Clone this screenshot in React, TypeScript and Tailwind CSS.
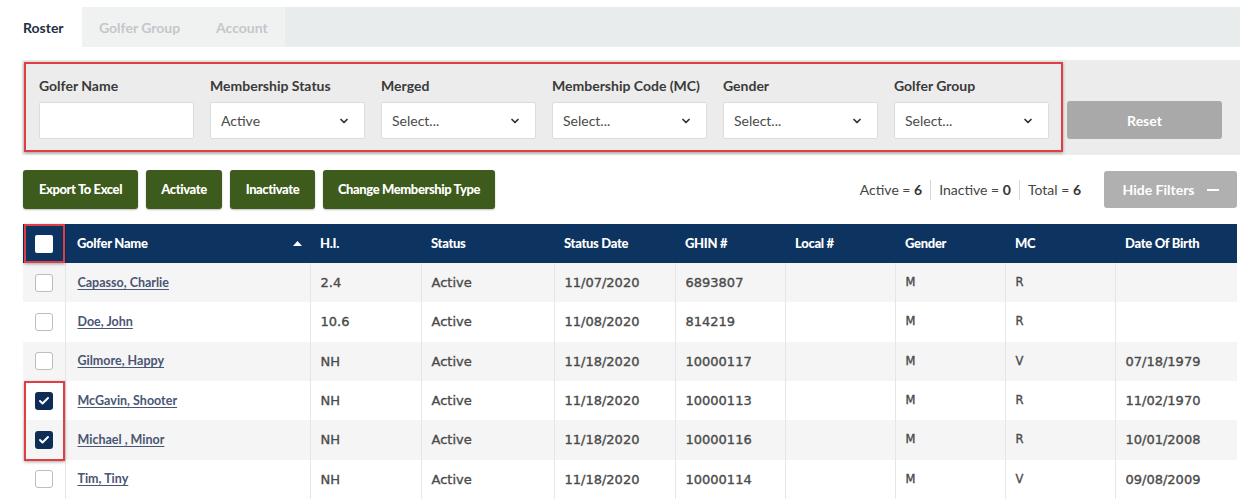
import React from "react";
import { ChevronDown, Check } from "lucide-react";

const LATO = "font-['Lato','Noto_Sans',sans-serif]";
const DEJA = "font-['DejaVu_Sans','Liberation_Sans',sans-serif]";

type Golfer = {
  name: string;
  hi: string;
  status: string;
  date: string;
  ghin: string;
  local: string;
  gender: string;
  mc: string;
  dob: string;
  checked: boolean;
};

const golfers: Golfer[] = [
  { name: "Capasso, Charlie", hi: "2.4", status: "Active", date: "11/07/2020", ghin: "6893807", local: "", gender: "M", mc: "R", dob: "", checked: false },
  { name: "Doe, John", hi: "10.6", status: "Active", date: "11/08/2020", ghin: "814219", local: "", gender: "M", mc: "R", dob: "", checked: false },
  { name: "Gilmore, Happy", hi: "NH", status: "Active", date: "11/18/2020", ghin: "10000117", local: "", gender: "M", mc: "V", dob: "07/18/1979", checked: false },
  { name: "McGavin, Shooter", hi: "NH", status: "Active", date: "11/18/2020", ghin: "10000113", local: "", gender: "M", mc: "R", dob: "11/02/1970", checked: true },
  { name: "Michael , Minor", hi: "NH", status: "Active", date: "11/18/2020", ghin: "10000116", local: "", gender: "M", mc: "R", dob: "10/01/2008", checked: true },
  { name: "Tim, Tiny", hi: "NH", status: "Active", date: "11/18/2020", ghin: "10000114", local: "", gender: "M", mc: "V", dob: "09/08/2009", checked: false },
];

function SelectBox({ value }: { value: string }) {
  return (
    <div className="flex h-[37px] w-[155px] items-center justify-between rounded-[2px] border border-[#dcdcdc] bg-white pl-[10px] pr-[14px]">
      <span className={`${LATO} text-[14px] text-[#4a4a4a]`}>{value}</span>
      <ChevronDown size={12} strokeWidth={3.5} className="text-[#333]" />
    </div>
  );
}

function FilterField({ label, children }: { label: string; children: React.ReactNode }) {
  return (
    <div className="flex w-[155px] flex-col">
      <div className={`${LATO} mb-[8px] h-[16px] text-[14px] font-bold leading-[16px] text-[#3a3a3a]`}>{label}</div>
      {children}
    </div>
  );
}

function CheckBox({ checked, header }: { checked?: boolean; header?: boolean }) {
  if (header) {
    return <div className="mx-auto h-[18px] w-[18px] rounded-[2px] bg-white" />;
  }
  if (checked) {
    return (
      <div className="mx-auto flex h-[18px] w-[18px] items-center justify-center rounded-[3px] bg-[#0d2d56]">
        <Check size={12} strokeWidth={4} className="text-white" />
      </div>
    );
  }
  return <div className="mx-auto h-[18px] w-[18px] rounded-[3px] border border-[#bdbdbd] bg-white" />;
}

function GreenButton({ label, w }: { label: string; w: string }) {
  return (
    <button
      className={`${LATO} ${w} h-[39px] rounded-[3px] bg-[#3d5b1c] text-[13px] font-black tracking-[-0.4px] text-white shadow-[0_1px_2px_rgba(0,0,0,0.25)]`}
    >
      {label}
    </button>
  );
}

const headers = ["Golfer Name", "H.I.", "Status", "Status Date", "GHIN #", "Local #", "Gender", "MC", "Date Of Birth"];
const widths = ["w-[42px]", "w-[245px]", "w-[111px]", "w-[133px]", "w-[121px]", "w-[110px]", "w-[110px]", "w-[110px]", "w-[110px]", "w-[122px]"];

export default function App() {
  return (
    <div className="h-[504px] w-[1248px] overflow-hidden bg-white pt-[7px]">
      {/* tab strip */}
      <div className="ml-[7px] mr-[8px] flex h-[40px] bg-[#e9ecec]">
        <div className={`${LATO} flex w-[75px] items-center bg-white pl-[16px] text-[14px] font-bold text-[#22303f]`}>Roster</div>
        <div className={`${LATO} flex w-[118px] items-center bg-[#f0f2f2] pl-[17px] text-[14px] font-bold text-[#c3c7ca]`}>Golfer Group</div>
        <div className={`${LATO} flex w-[85px] items-center bg-[#f0f2f2] pl-[16px] text-[14px] font-bold text-[#c3c7ca]`}>Account</div>
      </div>

      <div className="ml-[22px] mr-[8px]">
        {/* filter panel */}
        <div className="mt-[13px] flex h-[95px] items-start bg-[#ececec] pl-[2px] pt-[2px]">
          <div className="flex h-[90px] w-[1039px] gap-[16px] border-2 border-[#de3f47] pl-[13px] pt-[14px] shadow-[0_1px_3px_rgba(0,0,0,0.35)]">
            <FilterField label="Golfer Name">
              <div className="h-[37px] w-[155px] rounded-[2px] border border-[#dcdcdc] bg-white" />
            </FilterField>
            <FilterField label="Membership Status">
              <SelectBox value="Active" />
            </FilterField>
            <FilterField label="Merged">
              <SelectBox value="Select..." />
            </FilterField>
            <FilterField label="Membership Code (MC)">
              <SelectBox value="Select..." />
            </FilterField>
            <FilterField label="Gender">
              <SelectBox value="Select..." />
            </FilterField>
            <FilterField label="Golfer Group">
              <SelectBox value="Select..." />
            </FilterField>
          </div>
          <button className={`${LATO} ml-[4px] mt-[39px] h-[38px] w-[155px] rounded-[3px] bg-[#a9a9a9] text-[14px] font-bold text-white`}>
            Reset
          </button>
        </div>

        {/* actions and totals */}
        <div className="mt-[15px] flex items-center pl-[1px]">
          <div className="flex gap-[8px]">
            <GreenButton label="Export To Excel" w="w-[115px]" />
            <GreenButton label="Activate" w="w-[76px]" />
            <GreenButton label="Inactivate" w="w-[85px]" />
            <GreenButton label="Change Membership Type" w="w-[172px]" />
          </div>
          <div className={`${LATO} ml-auto flex items-center text-[14px] text-[#454545]`}>
            <span>
              Active = <b className="text-[#333]">6</b>
            </span>
            <span className="mx-[8px] h-[20px] w-px bg-[#d6d6d6]" />
            <span>
              Inactive = <b className="text-[#333]">0</b>
            </span>
            <span className="mx-[8px] h-[20px] w-px bg-[#d6d6d6]" />
            <span>
              Total = <b className="text-[#333]">6</b>
            </span>
          </div>
          <button
            className={`${LATO} ml-[23px] mr-[3px] flex h-[37px] w-[133px] items-center justify-center gap-[12px] rounded-[3px] bg-[#b0b0b0] text-[14px] font-bold text-white`}
          >
            Hide Filters
            <span className="h-[2px] w-[12px] bg-white" />
          </button>
        </div>

        {/* roster table */}
        <div className="relative ml-[1px] mt-[15px] w-[1214px]">
          <table className="w-[1214px] table-fixed border-collapse">
            <colgroup>
              {widths.map((w, i) => (
                <col key={i} className={w} />
              ))}
            </colgroup>
            <thead>
              <tr className="h-[39px] bg-[#0d3361]">
                <th className="p-0">
                  <CheckBox header />
                </th>
                {headers.map((h, i) => (
                  <th
                    key={h}
                    className={`${LATO} px-[10px] text-left text-[13px] font-black tracking-[-0.3px] text-white ${i === 0 ? "pl-[12px]" : ""}`}
                  >
                    {i === 0 ? (
                      <div className="flex items-center justify-between">
                        <span>{h}</span>
                        <svg width="9" height="5" viewBox="0 0 9 5" className="mr-[-2px]">
                          <path d="M0 5 L4.5 0 L9 5 Z" fill="white" />
                        </svg>
                      </div>
                    ) : (
                      h
                    )}
                  </th>
                ))}
              </tr>
            </thead>
            <tbody>
              {golfers.map((g, r) => (
                <tr key={g.name} className={`h-[39.33px] ${r % 2 === 0 ? "bg-[#f5f5f5]" : "bg-white"}`}>
                  <td className="border-r border-[#e6e6e6] p-0">
                    <CheckBox checked={g.checked} />
                  </td>
                  <td className="border-r border-[#e6e6e6] pl-[12px] align-middle">
                    <span
                      className={`${LATO} block text-[12.5px] font-bold leading-[16px] text-[#4a5673] underline decoration-1 underline-offset-[2px]`}
                    >
                      {g.name}
                    </span>
                  </td>
                  {[g.hi, g.status, g.date, g.ghin, g.local, g.gender, g.mc, g.dob].map((v, i) => (
                    <td
                      key={i}
                      className={`${DEJA} border-r border-[#e6e6e6] px-[10px] text-[#4a4a4a] [-webkit-text-stroke:0.35px_#4a4a4a] last:border-r-0 ${
                        i === 5 || i === 6 ? "text-[11.5px]" : "text-[13px]"
                      }`}
                    >
                      {v}
                    </td>
                  ))}
                </tr>
              ))}
            </tbody>
          </table>
          {/* highlight frames on the selection column */}
          <div className="pointer-events-none absolute left-[1px] top-0 h-[39px] w-[41px] border-2 border-[#de3f47] shadow-[0_1px_3px_rgba(0,0,0,0.35)]" />
          <div className="pointer-events-none absolute left-[1px] top-[157px] h-[80px] w-[41px] border-2 border-[#de3f47] shadow-[0_1px_3px_rgba(0,0,0,0.35)]" />
        </div>
      </div>
    </div>
  );
}
